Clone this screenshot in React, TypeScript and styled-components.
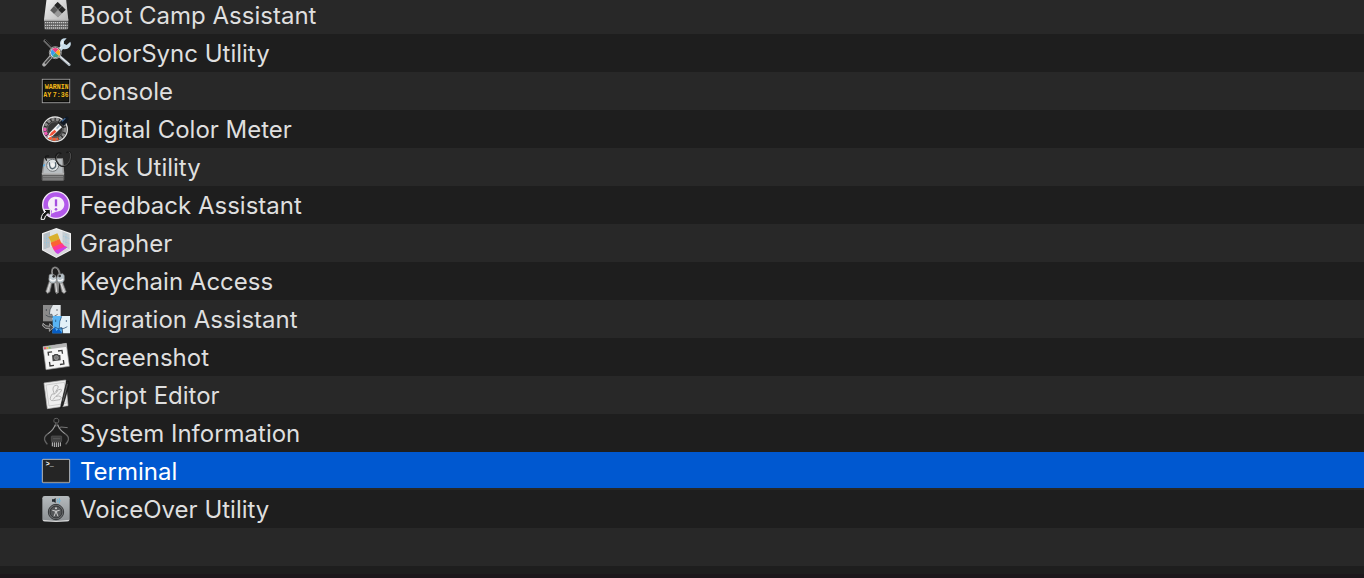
import React from "react";
import styled, { createGlobalStyle } from "styled-components";

const GlobalStyle = createGlobalStyle`
  html, body { margin: 0; background: #1e1e1e; }
  body { overflow: hidden; }
  * { box-sizing: border-box; }
`;

const Finder = styled.main`
  display: flex;
  flex-direction: column;
  height: 100vh;
  overflow: hidden;
  border-bottom: 4px solid #1c171b;
  background: #1e1e1e;
  font-family: Inter, "Liberation Sans", sans-serif;
`;

const FileList = styled.ul`
  list-style: none;
  margin: -4px 0 0;
  padding: 0;
`;

const Row = styled.li<{ $selected?: boolean }>`
  display: flex;
  align-items: center;
  gap: 8px;
  height: 38px;
  padding-left: 40px;
  font-size: 24px;
  line-height: 32px;
  color: ${(p) => (p.$selected ? "#ffffff" : "#dfdfdf")};
  &:nth-child(odd) { background: #282828; }
  &:nth-child(even) { background: #1e1e1e; }
  ${(p) => p.$selected && `&&& { background: #0058d0; border-bottom: 2px solid #282828; padding-top: 2px; }`}
`;

const Icon = styled.svg`
  flex: none;
  width: 32px;
  height: 32px;
  overflow: visible;
`;

const IconText = styled.text`
  font-family: "Liberation Mono", monospace;
  font-size: 20px;
  font-weight: 700;
`;

const Name = styled.span`
  padding-top: 2px;
  white-space: nowrap;
`;

const BootCamp = () => (
  <>
    <defs>
      <linearGradient id="bc" x1="0" y1="0" x2="1" y2="1">
        <stop offset="0" stopColor="#f4f4f4" /><stop offset="1" stopColor="#b9b9b9" />
      </linearGradient>
    </defs>
    <path d="M20 -2H78L85 62H12Z" fill="url(#bc)" />
    <path d="M12 62H85V86Q85 92 79 92H18Q12 92 12 86Z" fill="#5c5c5c" />
    <path d="M12 63H85" stroke="#f1f1f1" strokeWidth="3" />
    <path d="M15 71H83M15 79H83M15 87H83" stroke="#cacaca" strokeWidth="4" strokeDasharray="4 2" />
    <path d="M53 9L77 32L54 55L31 34Z" fill="#858585" />
    <path d="M53 9L65 20L54 31L43 19ZM66 21L77 32L66 43L55 32Z" fill="#242424" />
    <path d="M42 22L53 32L42 44L31 34Z" fill="#5d5d5d" />
    <path d="M54 34L65 44L54 55L43 45Z" fill="#9a9a9a" />
  </>
);

const ColorSync = () => (
  <>
    <path d="M12 9L40 38" stroke="#6c6c6c" strokeWidth="8" />
    <path d="M15 9L41 36" stroke="#111" strokeWidth="3" />
    <path d="M59 58L88 83" stroke="#aeb9c2" strokeWidth="8" strokeLinecap="round" />
    <path d="M61 59L87 81" stroke="#f5f5f5" strokeWidth="3" />
    <path d="M80 4Q62 1 60 18L61 28L48 43L57 50L69 36Q83 39 91 27Q94 20 91 14L80 24L72 20L72 13Z" fill="#c8ddeb" />
    <path d="M64 29L53 42M67 11L66 22" stroke="#fff" strokeWidth="3" />
    <path d="M34 58L12 83" stroke="#aaa" strokeWidth="11" strokeLinecap="round" />
    <path d="M34 59L15 80" stroke="#404040" strokeWidth="5" />
    <circle cx="46" cy="47" r="17" fill="#eee" stroke="#333" strokeWidth="3" />
    <path d="M46 47L36 37Q46 29 56 37Z" fill="#ef3f80" />
    <path d="M46 47L56 37Q64 47 57 57Z" fill="#ffad1d" />
    <path d="M46 47L57 57Q47 64 37 58Z" fill="#3d9f83" />
    <path d="M46 47L37 58Q29 47 36 37Z" fill="#369eea" />
    <circle cx="46" cy="47" r="18" fill="none" stroke="#cecece" strokeWidth="2" />
  </>
);

const Console = () => (
  <>
    <defs>
      <clipPath id="console-screen"><rect x="10" y="16" width="76" height="64" /></clipPath>
    </defs>
    <rect x="7" y="13" width="82" height="70" fill="#191912" stroke="#a6a6a6" strokeWidth="3" />
    <rect x="10" y="16" width="76" height="64" fill="none" stroke="#090909" strokeWidth="3" />
    <g clipPath="url(#console-screen)" fill="#f5ba18">
      <IconText x="14" y="43">WARNIN</IconText>
      <IconText x="10" y="67">AY</IconText>
      <IconText x="38" y="67">7:36</IconText>
    </g>
  </>
);

const DigitalColorMeter = () => (
  <>
    <circle cx="45" cy="49" r="37" fill="#303030" stroke="#e2e2e2" strokeWidth="4" />
    <circle cx="45" cy="49" r="30" fill="none" stroke="#8a8a8a" strokeWidth="9" strokeDasharray="9 4" />
    <path d="M15 45A30 30 0 0 0 23 69" fill="none" stroke="#f159b6" strokeWidth="9" strokeDasharray="9 3" />
    <path d="M27 73A30 30 0 0 0 55 77" fill="none" stroke="#f45b31" strokeWidth="9" strokeDasharray="9 3" />
    <circle cx="45" cy="49" r="23" fill="#353535" stroke="#777" strokeWidth="2" />
    <path d="M22 76L28 60L58 29L69 40L38 69Z" fill="#f4f6f7" />
    <path d="M27 70L33 59L44 50L49 56L37 67Z" fill="#f05138" />
    <path d="M50 47L61 35" stroke="#a7b8c5" strokeWidth="5" />
    <path d="M54 27L71 44" stroke="#252525" strokeWidth="5" />
    <path d="M59 28L77 11Q86 8 86 17Q86 22 71 39Z" fill="#101823" />
    <path d="M66 25L76 16" stroke="#3d6797" strokeWidth="4" />
  </>
);

const DiskUtility = () => (
  <>
    <path d="M12 22H69L73 69H5Z" fill="#999" />
    <path d="M15 24H65L68 66H10Z" fill="#b9bec1" />
    <path d="M5 68H73V85Q73 90 68 90H9Q5 90 5 85Z" fill="#606060" />
    <path d="M6 69H72" stroke="#ddd" strokeWidth="3" />
    <path d="M10 77H69M10 84H69" stroke="#969696" strokeWidth="4" strokeDasharray="4 2" />
    <path d="M20 29Q10 12 27 15M47 16Q55 1 64 8" fill="none" stroke="#171717" strokeWidth="4" />
    <circle cx="38" cy="43" r="18" fill="#e0e4e6" stroke="#73777a" strokeWidth="3" />
    <path d="M28 34Q28 55 39 53Q51 49 46 34" fill="none" stroke="#576670" strokeWidth="4" />
    <circle cx="38" cy="42" r="6" fill="#f4f4f4" />
    <path d="M54 7Q43 15 49 29Q58 48 72 46Q91 44 93 18Q94 5 87 2L79 5" fill="none" stroke="#181818" strokeWidth="4" />
    <path d="M56 8Q45 16 51 29Q59 46 72 44Q88 42 92 18Q93 5 87 2" fill="none" stroke="#666" strokeWidth="2" />
    <path d="M10 46L14 40" stroke="#4aabed" strokeWidth="4" />
  </>
);

const Feedback = () => (
  <>
    <circle cx="48" cy="48" r="40" fill="#b258ea" stroke="#f1e7f6" strokeWidth="4" />
    <path d="M48 23C63 23 73 33 73 46S63 68 48 68L34 74L36 65C17 56 20 23 48 23Z" fill="#f6edf9" />
    <path d="M48 31V52" stroke="#a54fdf" strokeWidth="7" />
    <circle cx="48" cy="61" r="4" fill="#a54fdf" />
    <path d="M3 91Q5 73 17 68L10 61H31V80L24 74Q14 80 13 91Z" fill="#151515" stroke="#fff" strokeWidth="3" />
  </>
);

const Grapher = () => (
  <>
    <path d="M49 3L93 19V70L49 93L6 70V19Z" fill="#f4f4f4" />
    <path d="M49 7L31 12L31 62L10 68V21Z" fill="#b9bfc3" />
    <path d="M31 13L49 7L67 13V57L49 49L31 60Z" fill="#dfe3e5" />
    <path d="M67 13L89 21V68L67 57Z" fill="#c5cdd1" />
    <path d="M31 60L49 50L89 69L49 90L10 69Z" fill="#d8d8dc" />
    <path d="M12 34H29M12 47H29M20 22V61M69 27L88 35M69 42L88 50M78 22V59" stroke="#82c4e7" strokeWidth="2" strokeDasharray="3 3" />
    <path d="M25 30L52 19Q57 28 59 37L33 48Q31 38 25 30Z" fill="#d9b02e" />
    <path d="M32 47L59 36Q62 47 68 51L40 64Q34 57 32 47Z" fill="#fb6332" />
    <path d="M37 61L66 49Q72 57 82 61L65 71L47 76Q41 70 37 61Z" fill="#ff3793" />
    <path d="M43 71L75 59L82 61L54 81Q48 79 43 71Z" fill="#c945e6" />
  </>
);

const Keychain = () => (
  <>
    <path d="M37 31C28 0 58-2 60 29" fill="none" stroke="#777" strokeWidth="5" />
    <path d="M38 27C31 3 56 2 57 27" fill="none" stroke="#aaa" strokeWidth="2" />
    <path d="M40 39L45 81L50 88L56 82L58 43" fill="#8d8d8d" />
    <path d="M27 49L17 79L22 86L30 81L37 51" fill="#b5b5b5" stroke="#484848" strokeWidth="2" />
    <path d="M58 50L65 81L72 86L79 80L67 48" fill="#b5b5b5" stroke="#484848" strokeWidth="2" />
    <path d="M30 55L23 80M62 54L73 82M47 55L50 81" stroke="#e0e0e0" strokeWidth="3" />
    <path d="M39 28Q26 24 27 37Q24 49 34 54Q47 57 50 45L47 32Z" fill="#c3ced4" stroke="#777" strokeWidth="2" />
    <path d="M54 28L69 26Q75 31 73 39Q75 51 62 55Q50 54 49 41Z" fill="#b5c1c8" stroke="#777" strokeWidth="2" />
    <circle cx="41" cy="34" r="4" fill="#333" /><circle cx="59" cy="33" r="4" fill="#333" />
    <path d="M30 43Q39 52 47 43M54 44Q62 51 69 42" fill="none" stroke="#f7f7f7" strokeWidth="4" />
  </>
);

const Migration = () => (
  <>
    <rect x="9" y="6" width="29" height="49" fill="#8b8b8b" />
    <path d="M38 6H62V51H38L35 35H28Q30 13 38 6Z" fill="#e4e9ec" />
    <path d="M19 18V24M51 18V24M17 36Q33 49 53 34M37 7Q28 19 28 34H36L38 45" fill="none" stroke="#303a42" strokeWidth="2" />
    <path d="M38 39H66V91H37Q40 68 38 63Z" fill="#59b4f4" />
    <path d="M65 39H90V91H68L66 75H58Q58 54 65 39Z" fill="#e3f1f8" />
    <path d="M47 50V57M79 51V57M44 72Q62 84 82 71M65 40Q57 54 58 74H66L68 90" fill="none" stroke="#173f6a" strokeWidth="2" />
    <path d="M38 78L45 73L49 84L56 77L65 88V91H37Z" fill="#075cc2" />
    <path d="M9 61L8 69Q17 80 28 76V85L41 73L29 62V70Q17 71 9 61Z" fill="#4b4b4b" stroke="#d7d7d7" strokeWidth="2" />
  </>
);

const Screenshot = () => (
  <>
    <path d="M9 17L79 7L88 76L18 86Z" fill="#f5f5f5" stroke="#929292" strokeWidth="2" />
    <path d="M9 17L79 7L81 17L10 27Z" fill="#b5b5b5" />
    <circle cx="15" cy="22" r="3" fill="#f44b68" /><circle cx="22" cy="21" r="3" fill="#f0b439" /><circle cx="29" cy="20" r="3" fill="#76c464" />
    <g fill="none" stroke="#3b3b3b" strokeWidth="4" transform="rotate(-8 48 51)">
      <path d="M27 41V31H39M57 31H69V41M27 60V72H39M57 72H69V60" />
    </g>
    <path d="M36 43L41 42L44 39H53L56 42L61 42L62 58L38 61Z" fill="#464646" />
    <circle cx="49" cy="50" r="6" fill="#777" stroke="#aaa" strokeWidth="2" />
  </>
);

const ScriptEditor = () => (
  <>
    <path d="M12 12L77 3L84 80L22 89Z" fill="#eeeeee" stroke="#b4b4b4" strokeWidth="2" />
    <path d="M18 18L73 10L79 73L27 81Z" fill="none" stroke="#bcbcbc" strokeWidth="2" />
    <path d="M50 19Q38 19 39 33L43 45Q35 42 33 51Q26 66 40 65L60 62Q69 53 56 51L48 52L61 40Q70 28 56 32L47 38L54 27Q57 20 50 19ZM43 45L53 37M47 52L39 62" fill="none" stroke="#999" strokeWidth="2" />
    <path d="M80 6L63 78L62 88L69 80L87 18L87 7Z" fill="#252525" stroke="#111" strokeWidth="2" />
    <path d="M82 15L69 67" stroke="#777" strokeWidth="2" />
  </>
);

const SystemInformation = () => (
  <>
    <path d="M43 17Q38 4 49 4Q60 5 55 17M47 15V29M51 15V29" fill="none" stroke="#656565" strokeWidth="3" />
    <path d="M46 22Q41 38 25 49Q7 61 17 75L22 82M53 22Q58 38 74 49Q92 61 82 75L77 82" fill="none" stroke="#626262" strokeWidth="4" />
    <path d="M46 24Q41 39 25 50M53 24Q58 39 74 50" fill="none" stroke="#bbb" strokeWidth="2" />
    <path d="M55 33L63 30L83 32" fill="none" stroke="#777" strokeWidth="3" />
    <rect x="34" y="57" width="31" height="17" rx="2" fill="#414141" stroke="#555" strokeWidth="2" />
    <path d="M37 76V88M43 76V90M49 76V90M55 76V90M61 76V88" stroke="#c8c8c8" strokeWidth="3" />
    <path d="M39 65H61" stroke="#666" strokeWidth="2" />
  </>
);

const Terminal = () => (
  <>
    <rect x="7" y="13" width="82" height="70" rx="2" fill="#252525" stroke="#b9b9b9" strokeWidth="3" />
    <path d="M7 82H89" stroke="#8b8b8b" strokeWidth="3" />
    <IconText x="17" y="34" fill="#ffffff">&gt;_</IconText>
  </>
);

const VoiceOver = () => (
  <>
    <defs>
      <linearGradient id="vo" x1="0" y1="0" x2="0" y2="1">
        <stop offset="0" stopColor="#b5babd" /><stop offset="1" stopColor="#8b8f92" />
      </linearGradient>
    </defs>
    <rect x="7" y="9" width="82" height="77" rx="7" fill="url(#vo)" />
    <path d="M9 82Q48 89 87 82" fill="none" stroke="#d8d8d8" strokeWidth="3" />
    <path d="M36 19H41L47 15V30L41 26H36Z" fill="#252b30" />
    <path d="M52 18Q56 23 52 28M57 15Q63 23 57 31" fill="none" stroke="#65b7dc" strokeWidth="3" />
    <circle cx="48" cy="57" r="23" fill="#77797b" stroke="#353739" strokeWidth="3" />
    <circle cx="48" cy="57" r="18" fill="#555759" stroke="#303234" strokeWidth="3" />
    <circle cx="48" cy="46" r="3" fill="#d0d0d0" />
    <path d="M37 52L46 54V60L42 70M59 52L50 54V60L54 70M46 54H50" fill="none" stroke="#d0d0d0" strokeWidth="3" />
  </>
);

const apps: { name: string; Art: () => React.JSX.Element; selected?: boolean }[] = [
  { name: "Boot Camp Assistant", Art: BootCamp },
  { name: "ColorSync Utility", Art: ColorSync },
  { name: "Console", Art: Console },
  { name: "Digital Color Meter", Art: DigitalColorMeter },
  { name: "Disk Utility", Art: DiskUtility },
  { name: "Feedback Assistant", Art: Feedback },
  { name: "Grapher", Art: Grapher },
  { name: "Keychain Access", Art: Keychain },
  { name: "Migration Assistant", Art: Migration },
  { name: "Screenshot", Art: Screenshot },
  { name: "Script Editor", Art: ScriptEditor },
  { name: "System Information", Art: SystemInformation },
  { name: "Terminal", Art: Terminal, selected: true },
  { name: "VoiceOver Utility", Art: VoiceOver },
];

export default function App() {
  return (
    <Finder>
      <GlobalStyle />
      <FileList>
        {apps.map(({ name, Art, selected }) => (
          <Row key={name} $selected={selected} aria-current={selected}>
            <Icon viewBox="0 0 96 96" aria-hidden="true"><Art /></Icon>
            <Name>{name}</Name>
          </Row>
        ))}
        <Row aria-hidden="true" />
      </FileList>
    </Finder>
  );
}
